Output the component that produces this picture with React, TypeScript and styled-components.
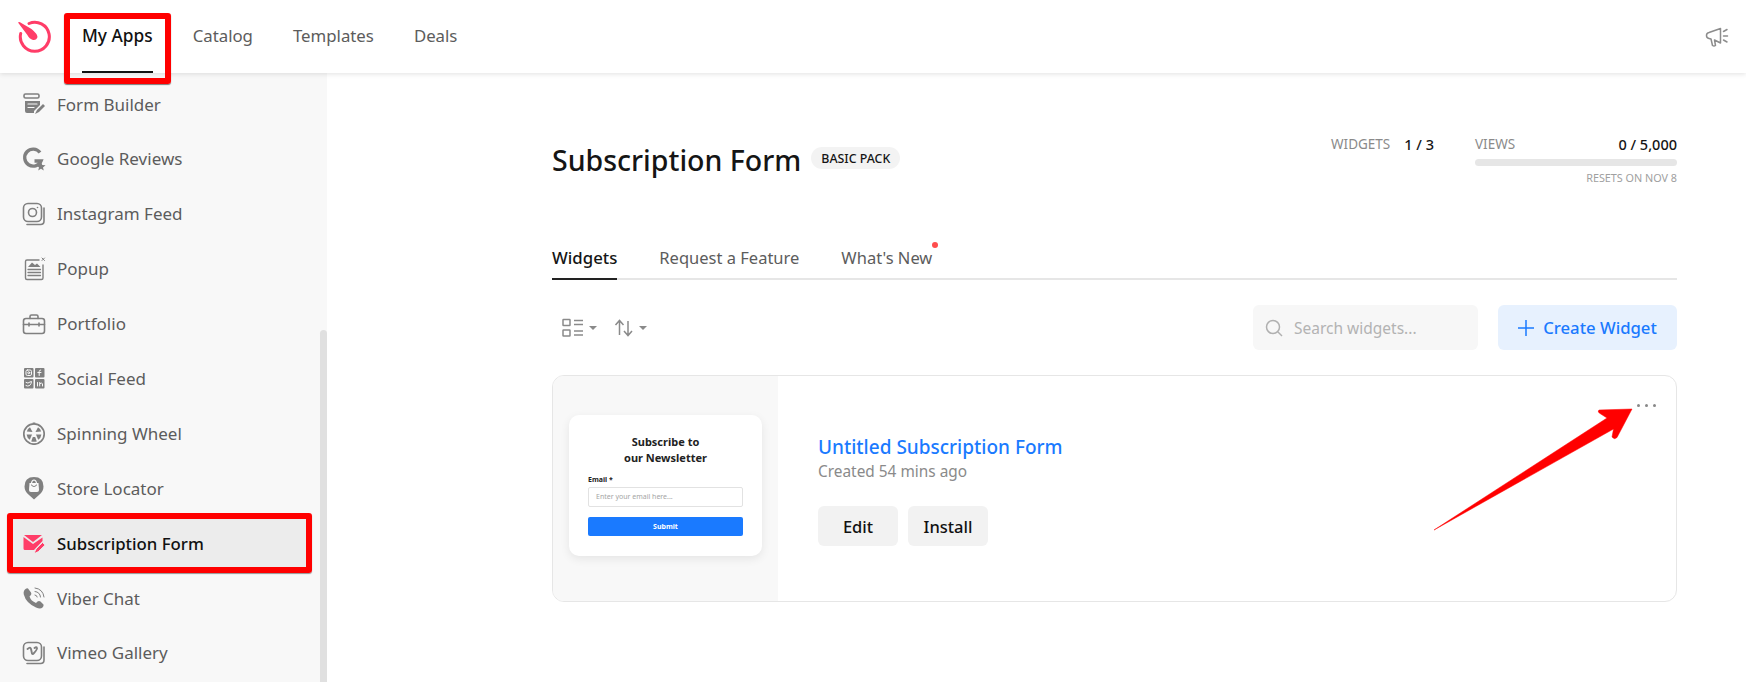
import React from "react";
import styled, { createGlobalStyle } from "styled-components";

const Global = createGlobalStyle`
  html, body { margin: 0; padding: 0; background: #fff; overflow: hidden; }
  * { box-sizing: border-box; }
  body { font-family: "Noto Sans", "Open Sans", sans-serif; }
`;

const Page = styled.div`
  position: relative;
  width: 1746px;
  height: 682px;
  display: flex;
  flex-direction: column;
  overflow: hidden;
`;

const Header = styled.header`
  position: relative;
  z-index: 3;
  flex: 0 0 73px;
  height: 73px;
  display: flex;
  align-items: center;
  padding: 0 17px 0 18px;
  background: #fff;
  box-shadow: 0 1px 5px rgba(0, 0, 0, 0.12);
`;

const Nav = styled.nav`
  display: flex;
  gap: 40px;
  height: 100%;
  margin-left: 31px;
`;

const NavItem = styled.a<{ $active?: boolean }>`
  position: relative;
  display: flex;
  padding-bottom: 1px;
  align-items: center;
  font-size: ${(p) => (p.$active ? "17.3px" : "16.8px")};
  font-weight: ${(p) => (p.$active ? 500 : 400)};
  color: ${(p) => (p.$active ? "#111" : "#5c5c5c")};
  border-bottom: 2px solid ${(p) => (p.$active ? "#111" : "transparent")};
`;

const NavMark = styled.span`
  position: absolute;
  left: -18px;
  right: -18px;
  top: 13px;
  height: 71px;
  border: 6px solid #f00;
  border-radius: 3px;
  box-shadow: 0 1px 1px rgba(0, 0, 0, 0.5);
`;

const HeaderEnd = styled.div`
  margin-left: auto;
  display: flex;
  align-items: center;
`;

const Body = styled.div`
  flex: 1;
  display: flex;
  min-height: 0;
`;

const Sidebar = styled.aside`
  position: relative;
  flex: 0 0 327px;
  padding: 7px 21px 0 13px;
  background: #f8f8f8;
  overflow: hidden;
`;

const Thumb = styled.span`
  position: absolute;
  right: 0;
  top: 257px;
  bottom: 0;
  width: 7px;
  background: #e0e0e0;
  border-radius: 4px 4px 0 0;
`;

const Row = styled.div<{ $active?: boolean }>`
  position: relative;
  height: 48px;
  margin-bottom: 6.9px;
  padding-left: 9px;
  display: flex;
  align-items: center;
  gap: 11px;
  font-size: ${(p) => (p.$active ? "16.8px" : "17px")};
  color: ${(p) => (p.$active ? "#111" : "#5c5c5c")};
  font-weight: ${(p) => (p.$active ? 500 : 400)};
  background: ${(p) => (p.$active ? "#ececec" : "transparent")};
`;

const RowMark = styled.span`
  position: absolute;
  inset: -6px;
  border: 6px solid #f00;
  border-radius: 3px;
  box-shadow: 0 1px 1px rgba(0, 0, 0, 0.4);
`;

const Main = styled.main`
  position: relative;
  flex: 1;
  padding: 59px 69px 0 225px;
`;

const TopRow = styled.div`
  display: flex;
  align-items: flex-start;
  height: 110px;
`;

const Title = styled.h1`
  margin: 0;
  font-size: 28.5px;
  line-height: 56px;
  font-weight: 500;
  color: #151515;
`;

const Pack = styled.span`
  margin: 15px 0 0 10px;
  height: 22px;
  padding: 0 10px;
  border-radius: 11px;
  background: #f3f3f3;
  display: flex;
  align-items: center;
  font-size: 12.4px;
  font-weight: 500;
  color: #151515;
`;

const Stats = styled.div`
  margin-left: auto;
  display: flex;
  gap: 41px;
  padding-top: 0;
`;

const StatLine = styled.div`
  display: flex;
  align-items: center;
  justify-content: space-between;
  gap: 14px;
  height: 24px;
`;

const StatLabel = styled.span`
  font-size: 13.5px;
  color: #8a8a8a;
`;

const StatValue = styled.span`
  font-size: 14.5px;
  font-weight: 500;
  color: #151515;
`;

const ViewsBlock = styled.div`
  width: 202px;
`;

const Bar = styled.div`
  height: 7px;
  margin-top: 3px;
  border-radius: 4px;
  background: #e6e6e6;
`;

const Resets = styled.div`
  margin-top: 5px;
  text-align: right;
  font-size: 10.8px;
  line-height: 14px;
  color: #a0a0a0;
`;

const Tabs = styled.div`
  display: flex;
  gap: 42px;
  height: 38px;
  border-bottom: 2px solid #e6e6e6;
`;

const Tab = styled.span<{ $active?: boolean }>`
  position: relative;
  height: 38px;
  font-size: ${(p) => (p.$active ? "16.8px" : "16.5px")};
  line-height: 24px;
  padding-top: 4px;
  font-weight: ${(p) => (p.$active ? 500 : 400)};
  color: ${(p) => (p.$active ? "#151515" : "#5c5c5c")};
  border-bottom: 2px solid ${(p) => (p.$active ? "#222" : "transparent")};
`;

const Dot = styled.i`
  position: absolute;
  right: -6px;
  top: 0;
  width: 6px;
  height: 6px;
  border-radius: 50%;
  background: #ff4d4d;
`;

const Toolbar = styled.div`
  display: flex;
  align-items: center;
  margin-top: 25px;
  height: 45px;
`;

const ToolGroup = styled.div`
  display: flex;
  align-items: center;
  gap: 5px;
  margin-left: 10px;
  margin-right: 7px;
`;

const Caret = styled.i`
  width: 0;
  height: 0;
  border-left: 4px solid transparent;
  border-right: 4px solid transparent;
  border-top: 4px solid #8a8a8a;
`;

const Search = styled.div`
  margin-left: auto;
  width: 225px;
  height: 45px;
  padding-left: 12px;
  gap: 11px;
  display: flex;
  align-items: center;
  border-radius: 6px;
  background: #f7f7f7;
  font-size: 15.5px;
  color: #b3b3b3;
`;

const Create = styled.button`
  margin-left: 20px;
  width: 179px;
  height: 45px;
  display: flex;
  align-items: center;
  justify-content: center;
  gap: 9px;
  border: 0;
  border-radius: 6px;
  background: #e7f1fe;
  font-family: inherit;
  font-size: 16.7px;
  font-weight: 500;
  color: #1a7aff;
`;

const Card = styled.section`
  position: relative;
  display: flex;
  height: 227px;
  margin-top: 25px;
  border: 1px solid #e6e6e6;
  border-radius: 12px;
  overflow: visible;
`;

const Preview = styled.div`
  flex: 0 0 225px;
  display: flex;
  align-items: center;
  justify-content: center;
  background: #f8f8f8;
  border-radius: 11px 0 0 11px;
`;

const Mini = styled.div`
  width: 193px;
  height: 141px;
  margin-top: -7px;
  padding: 19px 19px 0;
  background: #fff;
  border-radius: 10px;
  box-shadow: 0 3px 10px rgba(0, 0, 0, 0.08);
`;

const MiniTitle = styled.div`
  font-size: 11px;
  line-height: 16px;
  font-weight: 700;
  text-align: center;
  color: #222;
`;

const MiniLabel = styled.div`
  margin-top: 9px;
  font-size: 7px;
  line-height: 9px;
  font-weight: 700;
  color: #222;
`;

const MiniField = styled.div`
  margin-top: 3px;
  height: 20px;
  padding-left: 7px;
  display: flex;
  align-items: center;
  border: 1px solid #e2e2e2;
  border-radius: 2px;
  font-size: 7px;
  color: #a5a5a5;
`;

const MiniSubmit = styled.div`
  margin-top: 10px;
  height: 19px;
  display: flex;
  align-items: center;
  justify-content: center;
  border-radius: 2px;
  background: #1a7aff;
  font-size: 7px;
  font-weight: 700;
  color: #fff;
`;

const Info = styled.div`
  padding: 58px 0 0 40px;
`;

const Name = styled.div`
  font-size: 19px;
  line-height: 26px;
  font-weight: 500;
  color: #1a7aff;
`;

const Created = styled.div`
  margin-top: 1px;
  font-size: 15.4px;
  line-height: 22px;
  color: #8a8a8a;
`;

const Actions = styled.div`
  display: flex;
  gap: 10px;
  margin-top: 23px;
`;

const Action = styled.button`
  width: 80px;
  height: 40px;
  border: 0;
  border-radius: 6px;
  background: #f2f2f2;
  font-family: inherit;
  font-size: 16.5px;
  font-weight: 500;
  color: #111;
`;

const More = styled.div`
  position: absolute;
  right: 20px;
  top: 28px;
  display: flex;
  gap: 5px;
`;

const MoreDot = styled.i`
  width: 3px;
  height: 3px;
  border-radius: 50%;
  background: #888;
`;

const Arrow = styled.svg`
  position: absolute;
  left: 878px;
  top: 29px;
  overflow: visible;
`;

const G = "#808080";

const Logo = () => (
  <svg width="33" height="33" viewBox="0 0 33 33" fill="none">
    <path d="M11 3.5A14.5 14.5 0 1 1 2.7 13.5" stroke="#ff3d68" strokeWidth="3" strokeLinecap="round" />
    <path d="M0 2.5 Q1 1.5 2 2.2 L13.5 9 Q19.5 14 19.5 17 Q18.5 20.5 15 20 Q11.5 19 9 14.5 Z" fill="#ff3d68" />
  </svg>
);

const Megaphone = () => (
  <svg width="24" height="22" viewBox="0 0 24 22" fill="none" stroke="#8c8c8c" strokeWidth="1.5" strokeLinejoin="round" strokeLinecap="round">
    <path d="M15.5 2.5 L4 6.5 Q1.5 7 1.5 9.5 Q1.5 12 4 12.5 L6 13 L7.5 19.5 Q9 20.5 10.5 19.5 L9.5 14 L15.5 17 Z" />
    <path d="M18.5 5.5 L22 3.5 M18.5 10 H22.5 M18.5 14 L22 16" />
  </svg>
);

const Ic = ({ children }: { children: React.ReactNode }) => (
  <svg width="24" height="24" viewBox="0 0 24 24" fill="none" stroke={G} strokeWidth="1.6" strokeLinecap="round" strokeLinejoin="round" style={{ flex: "0 0 24px" }}>
    {children}
  </svg>
);

const icons: Record<string, React.ReactNode> = {
  form: (
    <Ic>
      <rect x="2" y="2" width="15" height="4" rx="1.5" />
      <path d="M3 9 H18 V13 L12 19 V21 H5 Q3 21 3 19 Z" fill={G} stroke="none" />
      <path d="M6 12 H15 M6 15.5 H12" stroke="#f8f8f8" strokeWidth="1.2" />
      <path d="M13 22 L15 18 L21 12 L23 14 L17 20 Z" fill={G} stroke="none" />
    </Ic>
  ),
  google: (
    <Ic>
      <path d="M18 5.5 A8.5 8.5 0 1 0 19 14 H12.5" strokeWidth="3.4" strokeLinecap="butt" strokeLinejoin="miter" />
      <path d="M19 15 L20.3 18 L23.5 18.3 L21 20.4 L21.8 23.5 L19 21.8 L16.2 23.5 L17 20.4 L14.5 18.3 L17.7 18 Z" fill={G} stroke="none" />
    </Ic>
  ),
  insta: (
    <Ic>
      <rect x="1.5" y="1.5" width="18" height="18" rx="4.5" />
      <circle cx="10.5" cy="10.5" r="4" />
      <circle cx="15.5" cy="5.5" r="0.8" fill={G} stroke="none" />
      <path d="M22 6 V19 Q22 22.5 18.5 22.5 H5" />
    </Ic>
  ),
  popup: (
    <Ic>
      <path d="M21 8 V21 Q21 22.5 19.5 22.5 H5 Q3.5 22.5 3.5 21 V4.5 Q3.5 3 5 3 H17" strokeWidth="1.4" />
      <path d="M6 10 L10 5.5 L13 8 L15 6.5 L18.5 10 Z" fill={G} stroke="none" />
      <path d="M6 12.5 H18.5 M6 15.5 H18.5 M6 18.5 H18.5" strokeWidth="1.3" />
      <path d="M20 1 L22.5 3.5 M22.5 1 L20 3.5" strokeWidth="1" />
    </Ic>
  ),
  portfolio: (
    <Ic>
      <rect x="1.5" y="6.5" width="21" height="15" rx="2.5" />
      <path d="M8 6.5 V4.5 Q8 3 9.5 3 H14.5 Q16 3 16 4.5 V6.5 M1.5 12.5 H22.5 M7 11 V14 M17 11 V14" />
    </Ic>
  ),
  social: (
    <Ic>
      <g fill={G} stroke="none">
        <rect x="2" y="2" width="9.5" height="9.5" rx="1" />
        <rect x="13" y="2" width="9.5" height="9.5" rx="1" />
        <rect x="2" y="13" width="9.5" height="9.5" rx="1" />
        <rect x="13" y="13" width="9.5" height="9.5" rx="1" />
      </g>
      <g stroke="#f8f8f8" strokeWidth="1" fill="none">
        <rect x="4" y="4" width="5.5" height="5.5" rx="1.4" />
        <circle cx="6.75" cy="6.75" r="1" />
        <path d="M18.7 4 Q17.2 4 17.2 5.5 V9.5 M15.8 6.5 H19" />
        <path d="M4 16.5 Q6 18 8 16 L9.5 15.5 Q9 20 5.5 20 L4 19.5" />
        <path d="M15.5 16.5 V20 M17.7 20 V16.5 M17.7 18 Q19.8 15.5 20.5 18 V20" />
      </g>
    </Ic>
  ),
  wheel: (
    <Ic>
      <circle cx="12" cy="13" r="10.2" strokeWidth="1.7" />
      <path d="M10.5 1.5 H13.5 L12 4 Z" fill={G} stroke="none" />
      <g fill={G} stroke="none">
        <path d="M10.5 11 L8 6.2 Q5.5 7.5 4.8 10.5 Z" />
        <path d="M13.5 11 L16 6.2 Q18.5 7.5 19.2 10.5 Z" />
        <path d="M10 13.5 L4.6 13.5 Q5 17 7.8 18.8 Z" />
        <path d="M14 13.5 L19.4 13.5 Q19 17 16.2 18.8 Z" />
        <path d="M10.8 16 H13.2 L14.8 20.5 Q12 21.2 9.2 20.5 Z" />
      </g>
    </Ic>
  ),
  store: (
    <Ic>
      <path d="M12 23.5 L7 19 Q2.5 15.5 2.5 10.5 Q2.5 1 12 1 Q21.5 1 21.5 10.5 Q21.5 15.5 17 19 Z" fill={G} stroke="none" />
      <path d="M7.5 7 H16.5 L17 14 Q17 16 15 16 H9 Q7 16 7 14 Z" fill="#f8f8f8" stroke="none" />
      <path d="M9.5 9 Q12 12 14.5 9" stroke={G} strokeWidth="1.1" />
      <path d="M9.5 7 Q10 4 12 4 Q14 4 14.5 7" stroke="#f8f8f8" strokeWidth="1.2" />
    </Ic>
  ),
  sub: (
    <Ic>
      <path d="M2 4 H20 L11 11 Z" fill="#ff3d68" stroke="none" />
      <path d="M1.5 6 L11 13 L20.5 6.5 V10 L12 19 H3 Q1.5 19 1.5 17.5 Z" fill="#ff3d68" stroke="none" />
      <path d="M12 22.5 L14 18 L20.5 11.5 L23.2 14 L16.5 20.5 Z" fill="#ff3d68" stroke="#ececec" strokeWidth="1" />
    </Ic>
  ),
  viber: (
    <Ic>
      <path d="M6 2.5 L9 6.5 Q10 8 8.5 9.5 L7.5 10.5 Q9 15 14 17 L15.5 15.5 Q17 14.5 18.5 15.5 L21.5 18.5 Q22 20 20.5 21.5 Q18.5 23.5 14 21.5 Q4 17 1.8 8.5 Q1 5 3.5 3 Q5 2 6 2.5 Z" fill={G} stroke="none" />
      <path d="M13 2 Q21 3 22 11 M13 5.5 Q18 6 18.5 11 M13 9 Q15 9.2 15.2 11" strokeWidth="1" />
    </Ic>
  ),
  vimeo: (
    <Ic>
      <rect x="1.5" y="1.5" width="18" height="18" rx="4.5" />
      <path d="M5.5 8 L7 7 Q8.5 6 9 8 L10 12.5 Q10.8 14 12 12 Q15.5 8 15 7 Q14.5 5.5 12.5 7" strokeWidth="1.9" />
      <path d="M22 6 V19 Q22 22.5 18.5 22.5 H5" />
    </Ic>
  ),
};

const items: [string, string][] = [
  ["form", "Form Builder"],
  ["google", "Google Reviews"],
  ["insta", "Instagram Feed"],
  ["popup", "Popup"],
  ["portfolio", "Portfolio"],
  ["social", "Social Feed"],
  ["wheel", "Spinning Wheel"],
  ["store", "Store Locator"],
  ["sub", "Subscription Form"],
  ["viber", "Viber Chat"],
  ["vimeo", "Vimeo Gallery"],
];

export default function App() {
  return (
    <Page>
      <Global />
      <Header>
        <Logo />
        <Nav>
          <NavItem $active>
            My Apps
            <NavMark />
          </NavItem>
          <NavItem>Catalog</NavItem>
          <NavItem>Templates</NavItem>
          <NavItem>Deals</NavItem>
        </Nav>
        <HeaderEnd>
          <Megaphone />
        </HeaderEnd>
      </Header>
      <Body>
        <Sidebar>
          {items.map(([k, label]) => {
            const active = k === "sub";
            return (
              <Row key={k} $active={active}>
                {icons[k]}
                {label}
                {active && <RowMark />}
              </Row>
            );
          })}
          <Thumb />
        </Sidebar>
        <Main>
          <TopRow>
            <Title>Subscription Form</Title>
            <Pack>BASIC PACK</Pack>
            <Stats>
              <StatLine>
                <StatLabel>WIDGETS</StatLabel>
                <StatValue>1 / 3</StatValue>
              </StatLine>
              <ViewsBlock>
                <StatLine>
                  <StatLabel>VIEWS</StatLabel>
                  <StatValue>0 / 5,000</StatValue>
                </StatLine>
                <Bar />
                <Resets>RESETS ON NOV 8</Resets>
              </ViewsBlock>
            </Stats>
          </TopRow>
          <Tabs>
            <Tab $active>Widgets</Tab>
            <Tab>Request a Feature</Tab>
            <Tab>
              What's New
              <Dot />
            </Tab>
          </Tabs>
          <Toolbar>
            <ToolGroup>
              <svg width="22" height="20" viewBox="0 0 22 20" fill="none" stroke="#8a8a8a" strokeWidth="1.5">
                <rect x="1" y="1.5" width="7" height="6" rx="0.5" />
                <rect x="1" y="12" width="7" height="6" rx="0.5" />
                <path d="M12 2.5 H21 M12 6.5 H21 M12 13 H21 M12 17 H21" />
              </svg>
              <Caret />
            </ToolGroup>
            <ToolGroup>
              <svg width="20" height="20" viewBox="0 0 20 20" fill="none" stroke="#8a8a8a" strokeWidth="1.5">
                <path d="M5.5 17 V3 M1.5 7 L5.5 2.5 L9.5 7 M14 3 V17 M10 13 L14 17.5 L18 13" />
              </svg>
              <Caret />
            </ToolGroup>
            <Search>
              <svg width="18" height="18" viewBox="0 0 18 18" fill="none" stroke="#b0b0b0" strokeWidth="1.5">
                <circle cx="8" cy="8" r="6.5" />
                <path d="M13 13 L17 17" />
              </svg>
              Search widgets...
            </Search>
            <Create>
              <svg width="16" height="16" viewBox="0 0 16 16" fill="none" stroke="#1a7aff" strokeWidth="1.5">
                <path d="M8 0 V16 M0 8 H16" />
              </svg>
              Create Widget
            </Create>
          </Toolbar>
          <Card>
            <Preview>
              <Mini>
                <MiniTitle>
                  Subscribe to
                  <br />
                  our Newsletter
                </MiniTitle>
                <MiniLabel>Email *</MiniLabel>
                <MiniField>Enter your email here...</MiniField>
                <MiniSubmit>Submit</MiniSubmit>
              </Mini>
            </Preview>
            <Info>
              <Name>Untitled Subscription Form</Name>
              <Created>Created 54 mins ago</Created>
              <Actions>
                <Action>Edit</Action>
                <Action>Install</Action>
              </Actions>
            </Info>
            <More>
              <MoreDot />
              <MoreDot />
              <MoreDot />
            </More>
            <Arrow width="200" height="125" viewBox="0 0 200 125">
              <path
                d="M3 125 L176 13 L169 8.5 Q166 7 168 5 L201 4 L186 32.5 Q183.5 35 181 32 L182.5 24 Z"
                fill="#f00"
                stroke="#f00"
                strokeWidth="0.5"
                strokeLinejoin="round"
              />
            </Arrow>
          </Card>
        </Main>
      </Body>
    </Page>
  );
}
